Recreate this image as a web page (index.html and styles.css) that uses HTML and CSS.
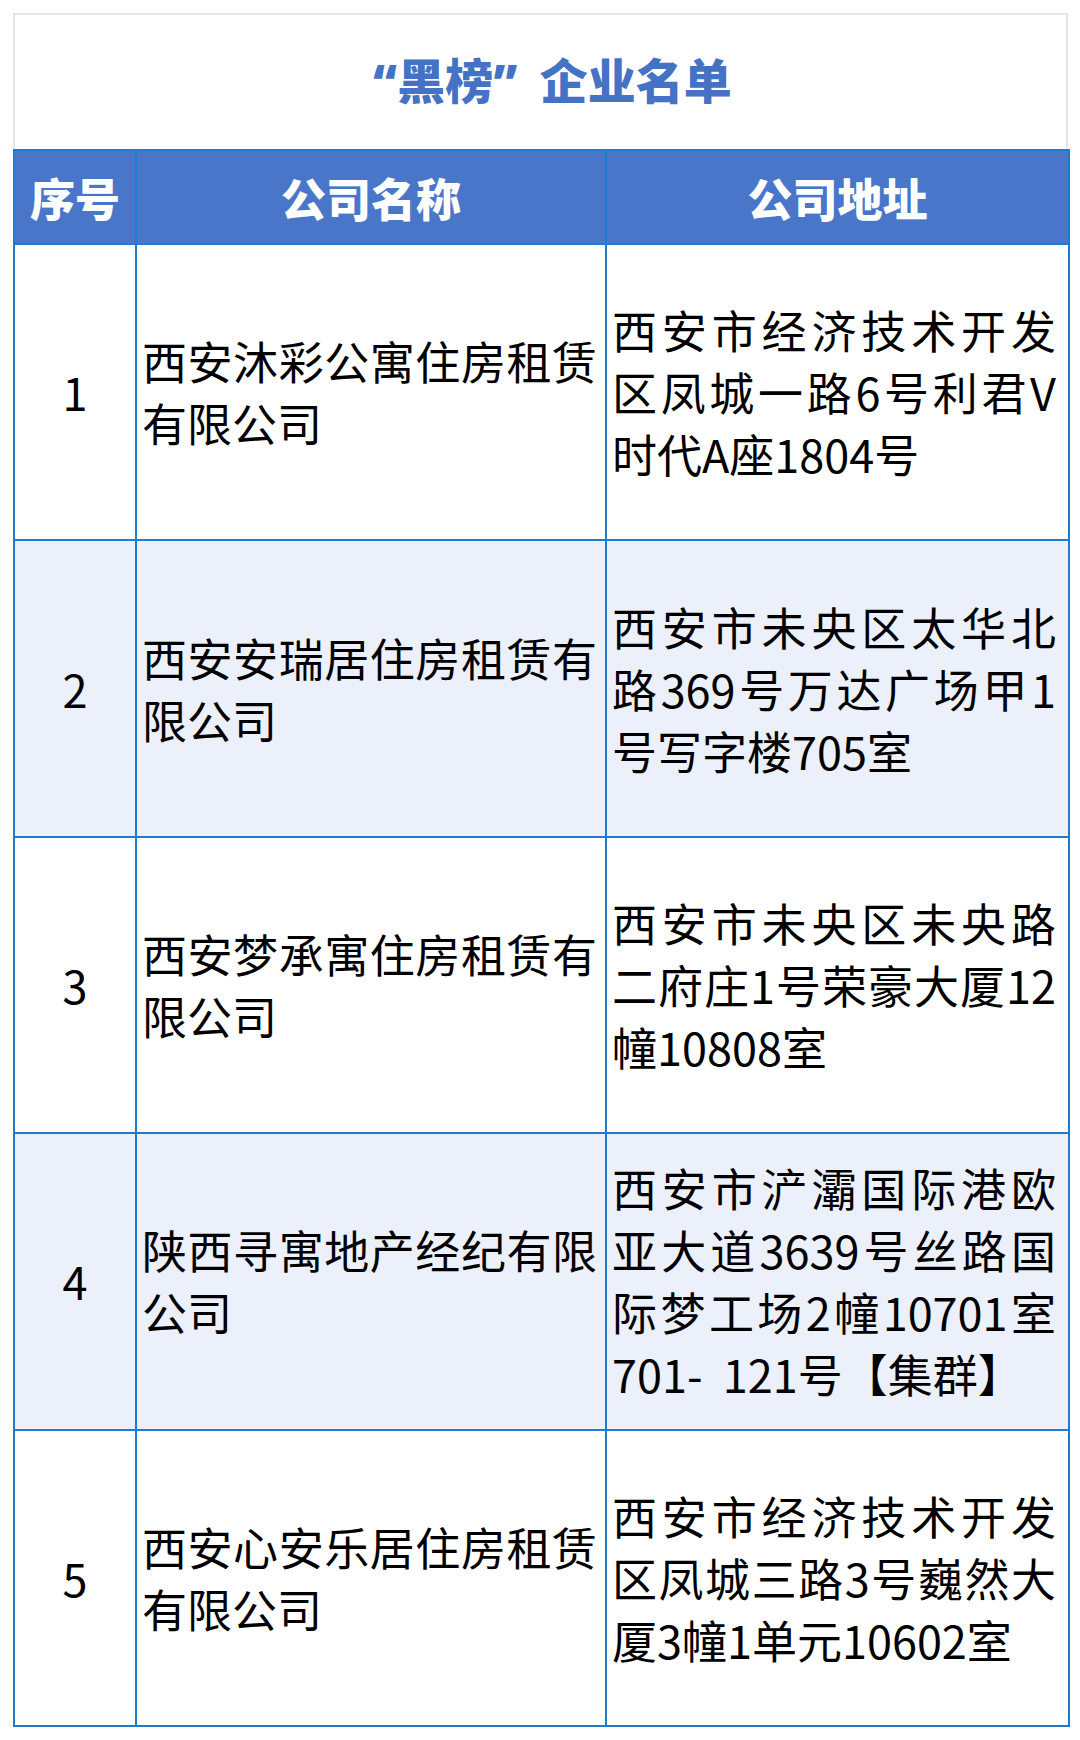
FILE: index.html
```html
<!DOCTYPE html>
<html lang="zh-CN">
<head>
<meta charset="utf-8">
<link rel="stylesheet" href="styles.css">
</head>
<body>
<div class="sheet">
  <div class="title-box"><h1 class="title">“黑榜” 企业名单</h1></div>
  <table class="list">
    <colgroup><col class="c-no"><col class="c-name"><col class="c-addr"></colgroup>
    <thead>
      <tr><th>序号</th><th>公司名称</th><th>公司地址</th></tr>
    </thead>
    <tbody>
      <tr><td class="no">1</td><td class="name">西安沐彩公寓住房租赁有限公司</td><td class="addr">西安市经济技术开发区凤城一路6号利君V时代A座1804号</td></tr>
      <tr class="alt"><td class="no">2</td><td class="name">西安安瑞居住房租赁有限公司</td><td class="addr">西安市未央区太华北路369号万达广场甲1号写字楼705室</td></tr>
      <tr><td class="no">3</td><td class="name">西安梦承寓住房租赁有限公司</td><td class="addr">西安市未央区未央路二府庄1号荣豪大厦12幢10808室</td></tr>
      <tr class="alt"><td class="no">4</td><td class="name">陕西寻寓地产经纪有限公司</td><td class="addr">西安市浐灞国际港欧亚大道3639号丝路国际梦工场2幢10701室<span class="nowrap">701-&nbsp; 121号</span>【集群】</td></tr>
      <tr><td class="no">5</td><td class="name">西安心安乐居住房租赁有限公司</td><td class="addr">西安市经济技术开发区凤城三路3号巍然大厦3幢1单元10602室</td></tr>
    </tbody>
  </table>
</div>
</body>
</html>
```
FILE: styles.css
```css
html, body {
  margin: 0;
  padding: 0;
  background: #ffffff;
}
body {
  font-family: "Noto Sans CJK SC", "Noto Sans", sans-serif;
  color: #000;
}
.sheet {
  width: 1055px;
  margin: 13px 0 0 13px;
}
.title-box {
  box-sizing: border-box;
  height: 136px;
  border: 2px solid #e6e6e6;
  border-bottom: none;
  display: flex;
  align-items: center;
  justify-content: center;
}
.title {
  margin: 0;
  padding: 0 0 8px 24px;
  font-family: "Noto Sans", "Noto Sans CJK SC", sans-serif;
  font-size: 48px;
  font-weight: 900;
  color: #4472c4;
  word-spacing: 10px;
}
.list {
  width: 1055px;
  border-collapse: collapse;
  table-layout: fixed;
}
.c-no { width: 122px; }
.c-name { width: 470px; }
.c-addr { width: 463px; }
.list th, .list td {
  border: 2px solid #1f7bd0;
}
.list th {
  height: 92px;
  padding: 0;
  background: #4a76c9;
  color: #fff;
  font-size: 45px;
  font-weight: 900;
  text-align: center;
  vertical-align: middle;
  line-height: 1;
}
.list td {
  height: 294.4px;
  font-size: 45px;
  line-height: 62px;
  vertical-align: middle;
  text-align: justify;
}
.list td.no {
  text-align: center;
  padding: 0;
}
.list td.name {
  padding: 0 8px 0 5px;
}
.list td.addr {
  padding: 0 12px 0 5px;
}
.nowrap {
  white-space: nowrap;
}
.list tr.alt td {
  background: #ebf0fa;
}
```
